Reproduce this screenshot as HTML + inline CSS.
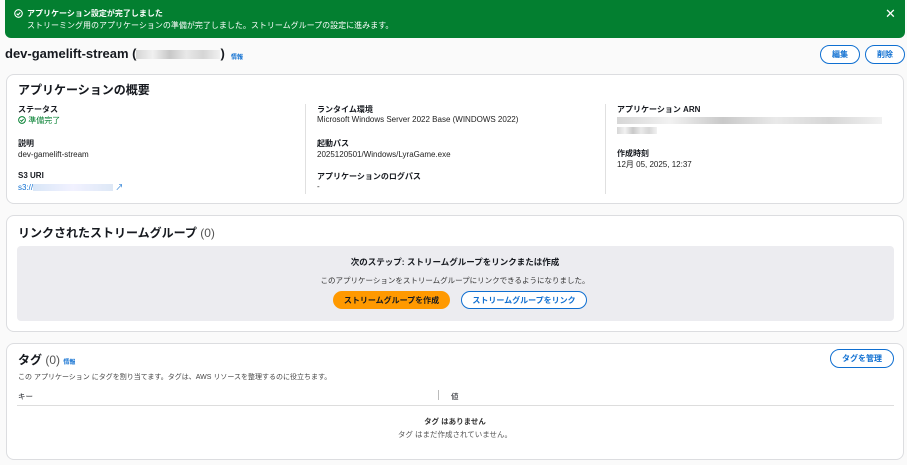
<!DOCTYPE html>
<html><head><meta charset="utf-8"><style>
*{box-sizing:border-box;margin:0;padding:0}
body{width:907px;height:465px;background:#fafafa;font-family:"Liberation Sans","Noto Sans CJK JP",sans-serif;color:#16191f;position:relative;overflow:hidden;font-size:8px}
.abs{position:absolute;white-space:nowrap}
.banner{position:absolute;left:5px;top:0;width:900px;height:38px;background:#037f30;border-radius:0 0 6px 6px;color:#fff}
.card{position:absolute;left:6px;width:898px;background:#fff;border:1px solid #dcdde0;border-radius:8px}
.lbl{font-weight:bold;font-size:8px}
.val{font-size:8px;color:#222}
.btn{position:absolute;border:1.5px solid #0f6fd1;border-radius:12px;color:#0f6fd1;font-weight:bold;font-size:8px;display:flex;align-items:center;justify-content:center;background:#fff}
.blur{display:inline-block;height:7px;background:linear-gradient(90deg,#ccc,#eee,#bbb,#e4e4e4,#ccc,#eee);opacity:.8}
</style></head><body>
<div class="banner">
 <svg class="abs" style="left:9px;top:9px" width="9" height="9" viewBox="0 0 10 10"><circle cx="5" cy="5" r="4.2" fill="none" stroke="#fff" stroke-width="1.2"/><path d="M3 5.2l1.5 1.4L7 3.8" fill="none" stroke="#fff" stroke-width="1.2"/></svg>
 <div class="abs" style="left:22px;top:8px;font-weight:bold;font-size:8px">アプリケーション設定が完了しました</div>
 <div class="abs" style="left:22px;top:20px;font-size:8px">ストリーミング用のアプリケーションの準備が完了しました。ストリームグループの設定に進みます。</div>
 <div class="abs" style="left:880px;top:6px;font-size:13px">✕</div>
</div>
<div class="abs" style="left:5px;top:46px;font-size:13px;font-weight:bold">dev-gamelift-stream (<span class="blur" style="width:84px;height:9px;vertical-align:-1px"></span>)</div>
<div class="abs" style="left:231px;top:52px;font-size:6px;color:#0f6fd1;font-weight:bold">情報</div>
<div class="btn" style="left:820px;top:45px;width:40px;height:19px">編集</div>
<div class="btn" style="left:865px;top:45px;width:40px;height:19px">削除</div>

<div class="card" style="top:74px;height:130px">
 <div class="abs" style="left:11px;top:6px;font-size:12px;font-weight:bold">アプリケーションの概要</div>
 <div style="position:absolute;left:298px;top:29px;width:1px;height:90px;background:#e0e0e0"></div>
 <div style="position:absolute;left:598px;top:29px;width:1px;height:90px;background:#e0e0e0"></div>
 <div class="abs lbl" style="left:11px;top:29px">ステータス</div>
 <div class="abs" style="left:11px;top:40px;color:#037f30"><svg width="8" height="8" viewBox="0 0 10 10" style="vertical-align:-1px"><circle cx="5" cy="5" r="4.2" fill="none" stroke="#037f30" stroke-width="1.2"/><path d="M3 5.2l1.5 1.4L7 3.8" fill="none" stroke="#037f30" stroke-width="1.2"/></svg> 準備完了</div>
 <div class="abs lbl" style="left:11px;top:63px">説明</div>
 <div class="abs val" style="left:11px;top:75px">dev-gamelift-stream</div>
 <div class="abs lbl" style="left:11px;top:96px">S3 URI</div>
 <div class="abs val" style="left:11px;top:107px;color:#0f6fd1">s3://<span class="blur" style="width:80px;vertical-align:middle;background:linear-gradient(90deg,#cfe0f5,#eef,#d5e2f4)"></span> ↗</div>
 <div class="abs lbl" style="left:310px;top:29px">ランタイム環境</div>
 <div class="abs val" style="left:310px;top:40px">Microsoft Windows Server 2022 Base (WINDOWS 2022)</div>
 <div class="abs lbl" style="left:310px;top:63px">起動パス</div>
 <div class="abs val" style="left:310px;top:75px">2025120501/Windows/LyraGame.exe</div>
 <div class="abs lbl" style="left:310px;top:96px">アプリケーションのログパス</div>
 <div class="abs val" style="left:310px;top:107px">-</div>
 <div class="abs lbl" style="left:610px;top:29px">アプリケーション ARN</div>
 <div class="abs" style="left:610px;top:42px"><span class="blur" style="width:265px"></span></div>
 <div class="abs" style="left:610px;top:52px"><span class="blur" style="width:40px"></span></div>
 <div class="abs lbl" style="left:610px;top:73px">作成時刻</div>
 <div class="abs val" style="left:610px;top:84px">12月 05, 2025, 12:37</div>
</div>

<div class="card" style="top:215px;height:117px">
 <div class="abs" style="left:11px;top:8px;font-size:12px;font-weight:bold">リンクされたストリームグループ <span style="font-weight:normal;color:#555">(0)</span></div>
 <div style="position:absolute;left:10px;top:30px;width:877px;height:75px;background:#ececf0;border-radius:4px"></div>
 <div class="abs" style="left:0;width:896px;text-align:center;top:40px;font-weight:bold;font-size:8.5px">次のステップ: ストリームグループをリンクまたは作成</div>
 <div class="abs" style="left:0;width:896px;text-align:center;top:59px;font-size:7.5px;color:#333">このアプリケーションをストリームグループにリンクできるようになりました。</div>
 <div class="btn" style="left:326px;top:75px;width:117px;height:18px;background:#ff9900;border-color:#ff9900;color:#16191f">ストリームグループを作成</div>
 <div class="btn" style="left:454px;top:75px;width:126px;height:18px">ストリームグループをリンク</div>
</div>

<div class="card" style="top:343px;height:117px">
 <div class="abs" style="left:11px;top:7px;font-size:12px;font-weight:bold">タグ <span style="font-weight:normal;color:#555">(0)</span> <span style="font-size:6px;color:#0f6fd1">情報</span></div>
 <div class="btn" style="left:823px;top:5px;width:64px;height:19px">タグを管理</div>
 <div class="abs" style="left:11px;top:28px;font-size:7px;color:#444">この アプリケーション にタグを割り当てます。タグは、AWS リソースを整理するのに役立ちます。</div>
 <div class="abs" style="left:11px;top:47px;font-size:7.5px">キー</div>
 <div style="position:absolute;left:431px;top:46px;width:1px;height:10px;background:#bbb"></div>
 <div class="abs" style="left:444px;top:47px;font-size:7.5px">値</div>
 <div style="position:absolute;left:10px;top:61px;width:877px;height:1px;background:#ddd"></div>
 <div class="abs" style="left:0;width:896px;text-align:center;top:72px;font-size:7.5px;font-weight:bold;color:#333">タグ はありません</div>
 <div class="abs" style="left:0;width:896px;text-align:center;top:85px;font-size:7.5px;color:#555">タグ はまだ作成されていません。</div>
</div>
</body></html>
